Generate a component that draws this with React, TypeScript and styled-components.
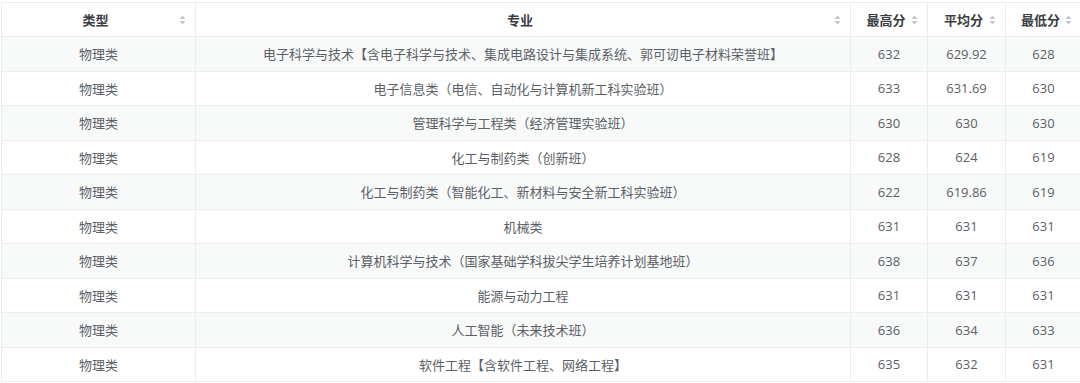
import React from "react";
import styled, { createGlobalStyle } from "styled-components";

const GlobalStyle = createGlobalStyle`
  html, body { margin: 0; padding: 0; background: #ffffff; }
  body { font-family: "Open Sans", "Noto Sans CJK SC", sans-serif; }
`;

const Wrap = styled.div`
  padding: 2px 4px 0 1px;
`;

const Table = styled.table`
  width: 1075px;
  border-collapse: collapse;
  table-layout: fixed;
  font-family: "Open Sans", "Noto Sans CJK SC", sans-serif;
  font-size: 13px;
`;

const HeadCell = styled.th<{ $w: number }>`
  width: ${(p) => p.$w}px;
  height: 33px;
  padding: 0;
  border: 1px solid #ebeef0;
  background: #ffffff;
  color: #3a3d42;
  font-weight: 700;
`;

const HeadInner = styled.div`
  display: flex;
  align-items: center;
  padding: 0 9px 0 12px;
`;

const HeadText = styled.span`
  flex: 1;
  text-align: center;
`;

const SortIcon = styled.svg`
  width: 7px;
  height: 10px;
  flex: none;
  margin-left: 2px;
`;

const Row = styled.tr<{ $striped: boolean }>`
  background: ${(p) => (p.$striped ? "#f8f9f9" : "#ffffff")};
`;

const Cell = styled.td`
  height: 33.5px;
  padding: 0 8px;
  border: 1px solid #ebeef0;
  color: #5b5f66;
  text-align: center;
  white-space: nowrap;
`;

const Sort = () => (
  <SortIcon viewBox="0 0 7 10">
    <path d="M3.5 0.5 L6.5 4 L0.5 4 Z" fill="#c3c7cd" />
    <path d="M3.5 9.5 L6.5 6 L0.5 6 Z" fill="#c3c7cd" />
  </SortIcon>
);

const headers: { label: string; w: number }[] = [
  { label: "类型", w: 193 },
  { label: "专业", w: 654 },
  { label: "最高分", w: 76 },
  { label: "平均分", w: 77 },
  { label: "最低分", w: 75 },
];

const rows: string[][] = [
  ["物理类", "电子科学与技术【含电子科学与技术、集成电路设计与集成系统、郭可讱电子材料荣誉班】", "632", "629.92", "628"],
  ["物理类", "电子信息类（电信、自动化与计算机新工科实验班）", "633", "631.69", "630"],
  ["物理类", "管理科学与工程类（经济管理实验班）", "630", "630", "630"],
  ["物理类", "化工与制药类（创新班）", "628", "624", "619"],
  ["物理类", "化工与制药类（智能化工、新材料与安全新工科实验班）", "622", "619.86", "619"],
  ["物理类", "机械类", "631", "631", "631"],
  ["物理类", "计算机科学与技术（国家基础学科拔尖学生培养计划基地班）", "638", "637", "636"],
  ["物理类", "能源与动力工程", "631", "631", "631"],
  ["物理类", "人工智能（未来技术班）", "636", "634", "633"],
  ["物理类", "软件工程【含软件工程、网络工程】", "635", "632", "631"],
];

export default function App() {
  return (
    <>
      <GlobalStyle />
      <Wrap>
        <Table>
          <thead>
            <tr>
              {headers.map((h) => (
                <HeadCell key={h.label} $w={h.w}>
                  <HeadInner>
                    <HeadText>{h.label}</HeadText>
                    <Sort />
                  </HeadInner>
                </HeadCell>
              ))}
            </tr>
          </thead>
          <tbody>
            {rows.map((r, i) => (
              <Row key={i} $striped={i % 2 === 0}>
                {r.map((c, j) => (
                  <Cell key={j}>{c}</Cell>
                ))}
              </Row>
            ))}
          </tbody>
        </Table>
      </Wrap>
    </>
  );
}
